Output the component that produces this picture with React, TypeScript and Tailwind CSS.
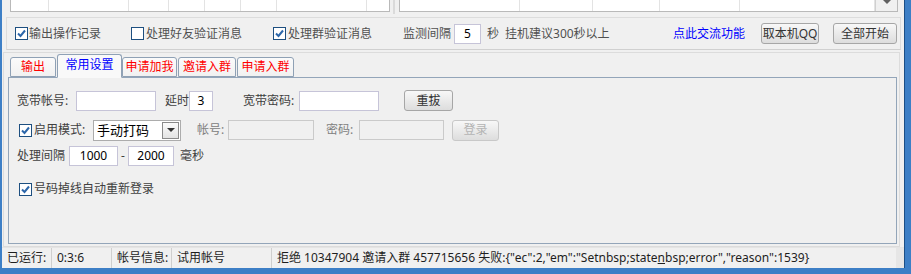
import React from "react";

const Check = ({ on }: { on: boolean }) => (
  <svg width="13" height="13" viewBox="0 0 13 13" className="shrink-0">
    <rect x="0.5" y="0.5" width="12" height="12" fill="#fff" stroke="#1d4f80" />
    {on && <path d="M3 6.5 L5.5 9 L10 3.5" fill="none" stroke="#2d67aa" strokeWidth="2" />}
  </svg>
);

const Btn = ({ children, w, disabled }: { children: React.ReactNode; w: string; disabled?: boolean }) => (
  <div
    className={`${w} h-[21px] shrink-0 flex items-center justify-center rounded-[3px] border bg-gradient-to-b from-[#f8f8f8] to-[#dddddd] ${
      disabled ? "border-[#c8c8c8] text-[#b4b4b4]" : "border-[#a6a6a6] text-[#333]"
    }`}
  >
    {children}
  </div>
);

const Field = ({ w, value, disabled }: { w: string; value?: string; disabled?: boolean }) => (
  <div
    className={`${w} h-[20px] shrink-0 border flex items-center justify-center text-black ${
      disabled ? "bg-[#f0f0f0] border-[#cacaca]" : "bg-white border-[#c6c4d8]"
    }`}
  >
    {value}
  </div>
);

const Tab = ({ label, w, active }: { label: string; w: string; active?: boolean }) => (
  <div
    className={`${w} shrink-0 flex items-center justify-center border border-[#8fa1b5] rounded-t-[3px] ${
      active
        ? "h-[24px] bg-[#f9f9f9] border-b-[#f9f9f9] text-[#0000ff] relative z-10 -mb-px pb-[2px]"
        : "h-[20px] bg-gradient-to-b from-[#fbfbfb] to-[#f1f1f1] text-[#ff0000]"
    }`}
  >
    {label}
  </div>
);

const leftCols = [38, 80, 40, 36, 36, 36, 90];
const rightCols = [120, 73, 67, 80, 135];

export default function App() {
  return (
    <div className="w-[911px] h-[274px] bg-[#3d7fc6] pl-[2px] pr-[6px] pb-[6px] font-['Noto_Sans','Noto_Sans_CJK_SC',sans-serif] text-[12px] leading-none">
      <div className="h-[268px] bg-[#f0f0f0] flex flex-col border-r border-[#1c4f86]">
        {/* top lists */}
        <div className="h-[17px] flex items-start">
          <div className="ml-[8px] w-[380px] h-[12px] bg-white border-l border-b border-r border-[#b9b9b9] flex">
            {leftCols.map((c, i) => (
              <div key={i} style={{ width: c }} className="h-full border-r border-[#e3e3e3] shrink-0" />
            ))}
          </div>
          <div className="ml-[3px] w-[2px] h-[14px] border-x border-[#dadada]" />
          <div className="ml-[4px] w-[499px] h-[12px] bg-white border-l border-b border-r border-[#b9b9b9] flex">
            {rightCols.map((c, i) => (
              <div key={i} style={{ width: c }} className="h-full border-r border-[#e3e3e3] shrink-0" />
            ))}
            <div className="ml-auto w-[24px] h-full bg-[#f0f0f0] border-l border-[#d0d0d0] flex justify-center">
              <svg width="8" height="4" viewBox="0 0 8 4">
                <path d="M0 0 L8 0 L4 4 Z" fill="#606060" />
              </svg>
            </div>
          </div>
        </div>

        {/* options */}
        <div className="h-[33px] ml-[4px] mr-[3px] border border-[#dcdcdc] border-b-[#d0d0d0] flex items-center pl-[8px] text-[#505050]">
          <label className="w-[116px] shrink-0 flex items-center gap-[1px]">
            <Check on />
            <span>输出操作记录</span>
          </label>
          <label className="w-[142px] shrink-0 flex items-center gap-[2px]">
            <Check on={false} />
            <span>处理好友验证消息</span>
          </label>
          <label className="w-[130px] shrink-0 flex items-center gap-[2px]">
            <Check on />
            <span>处理群验证消息</span>
          </label>
          <div className="w-[270px] shrink-0 flex items-center">
            <span>监测间隔</span>
            <div className="ml-[3px] w-[27px] h-[20px] bg-white border border-[#c6c4d8] flex items-center justify-center text-black">5</div>
            <span className="ml-[6px]">秒</span>
            <span className="ml-[6px]">挂机建议300秒以上</span>
          </div>
          <span className="w-[88px] shrink-0 text-[#0000ff]">点此交流功能</span>
          <Btn w="w-[58px]">取本机QQ</Btn>
          <div className="ml-[14px]">
            <Btn w="w-[64px]">全部开始</Btn>
          </div>
        </div>

        {/* tab panel */}
        <div className="mt-[2px] h-[195px] ml-[1px] mr-[4px] border border-[#dcdcdc] flex flex-col">
          <div className="h-[24px] pl-[6px] flex items-end">
            <Tab label="输出" w="w-[46px]" />
            <div className="ml-[1px]">
              <Tab label="常用设置" w="w-[65px]" active />
            </div>
            <Tab label="申请加我" w="w-[55px]" />
            <div className="ml-[1px]">
              <Tab label="邀请入群" w="w-[58px]" />
            </div>
            <div className="ml-[1px]">
              <Tab label="申请入群" w="w-[57px]" />
            </div>
          </div>
          <div className="ml-[4px] w-[889px] h-[167px] border border-[#93a5b9] pt-[12px] pl-[8px] text-[#404040] flex flex-col">
            <div className="h-[21px] flex items-center">
              <span className="w-[59px] shrink-0">宽带帐号:</span>
              <Field w="w-[80px]" />
              <span className="ml-[9px] w-[24px] shrink-0">延时</span>
              <Field w="w-[24px]" value="3" />
              <span className="ml-[30px] w-[56px] shrink-0">宽带密码:</span>
              <Field w="w-[80px]" />
              <div className="ml-[25px]">
                <Btn w="w-[49px]">重拔</Btn>
              </div>
            </div>
            <div className="mt-[8px] h-[22px] flex items-center">
              <div className="ml-[2px] w-[15px] shrink-0 flex">
                <Check on />
              </div>
              <span className="w-[59px] shrink-0">启用模式:</span>
              <div className="w-[88px] h-[21px] shrink-0 bg-white border border-[#acacac] flex items-center pl-[3px] pr-[1px] text-black text-[13px]">
                <span>手动打码</span>
                <div className="ml-auto w-[17px] h-[17px] border border-[#8a8a8a] bg-gradient-to-b from-[#fbfbfb] to-[#e3e3e3] flex items-center justify-center">
                  <svg width="8" height="4" viewBox="0 0 8 4">
                    <path d="M0 0 L8 0 L4 4 Z" fill="#333" />
                  </svg>
                </div>
              </div>
              <span className="ml-[16px] w-[31px] shrink-0 text-[#808080]">帐号:</span>
              <Field w="w-[86px]" disabled />
              <span className="ml-[12px] w-[33px] shrink-0 text-[#808080]">密码:</span>
              <Field w="w-[85px]" disabled />
              <div className="ml-[8px]">
                <Btn w="w-[47px]" disabled>
                  登录
                </Btn>
              </div>
            </div>
            <div className="mt-[5px] h-[20px] flex items-center">
              <span className="w-[52px] shrink-0">处理间隔</span>
              <Field w="w-[49px]" value="1000" />
              <span className="w-[10px] shrink-0 text-center">-</span>
              <Field w="w-[46px]" value="2000" />
              <span className="ml-[6px]">毫秒</span>
            </div>
            <div className="mt-[16px] h-[14px] flex items-center">
              <div className="ml-[2px] w-[15px] shrink-0 flex">
                <Check on />
              </div>
              <span>号码掉线自动重新登录</span>
            </div>
          </div>
        </div>

        {/* status bar */}
        <div className="h-[21px] flex items-center border-t border-[#e4e4e4] text-[#1e1e1e]">
          <div className="w-[50px] h-full shrink-0 flex items-center pl-[5px] border-r border-[#cfcfcf]">已运行:</div>
          <div className="w-[60px] h-full shrink-0 flex items-center pl-[5px] border-r border-[#cfcfcf]">0:3:6</div>
          <div className="w-[60px] h-full shrink-0 flex items-center pl-[5px] border-r border-[#cfcfcf]">帐号信息:</div>
          <div className="w-[100px] h-full shrink-0 flex items-center pl-[5px] border-r border-[#cfcfcf]">试用帐号</div>
          <div className="flex-1 h-full flex items-center pl-[5px] whitespace-nowrap overflow-hidden">
            拒绝 10347904 邀请入群 457715656 失败:{'{"ec":2,"em":"Setnbsp;state'}
            <u>n</u>
            {'bsp;error","reason":1539}'}
          </div>
          <div className="w-[8px] h-full shrink-0 bg-[#e6e6e6]" />
        </div>
      </div>
    </div>
  );
}
